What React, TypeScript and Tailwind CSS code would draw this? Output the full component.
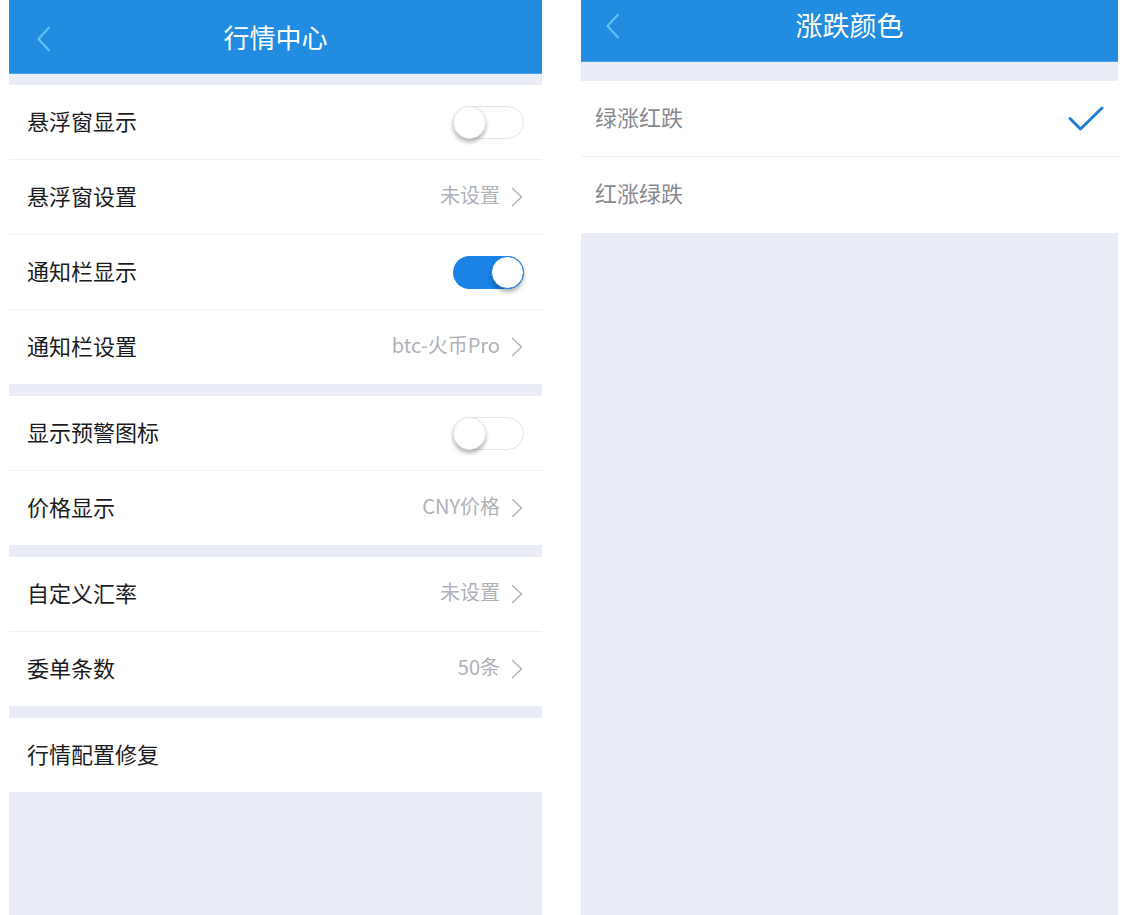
import React from 'react';

type Row = {
    label: string;
    value?: string;
    toggle?: boolean;
    arrow?: boolean;
};

const groups: Row[][] = [
    [
        { label: '悬浮窗显示', toggle: false },
        { label: '悬浮窗设置', value: '未设置', arrow: true },
        { label: '通知栏显示', toggle: true },
        { label: '通知栏设置', value: 'btc-火币Pro', arrow: true },
    ],
    [
        { label: '显示预警图标', toggle: false },
        { label: '价格显示', value: 'CNY价格', arrow: true },
    ],
    [
        { label: '自定义汇率', value: '未设置', arrow: true },
        { label: '委单条数', value: '50条', arrow: true },
    ],
    [{ label: '行情配置修复' }],
];

const font = { fontFamily: '"Noto Sans CJK SC", "Noto Sans", sans-serif' };

function BackArrow() {
    return (
        <svg width="16" height="26" viewBox="0 0 16 26" fill="none">
            <path d="M13 1.5 L2.5 13 L13 24.5" stroke="#5ec4f6" strokeWidth="2" strokeLinecap="round" strokeLinejoin="round" />
        </svg>
    );
}

function Chevron() {
    return (
        <svg width="14" height="20" viewBox="0 0 14 20" fill="none">
            <path d="M2.5 1.5 L11.5 10 L2.5 18.5" stroke="#b4b6bc" strokeWidth="1.6" strokeLinecap="round" strokeLinejoin="round" />
        </svg>
    );
}

function Toggle({ on }: { on: boolean }) {
    if (on) {
        return (
            <div className="relative h-[33px] w-[71px] rounded-full bg-[#1b82e6]">
                <div className="absolute right-0 top-0 h-[33px] w-[33px] rounded-full border border-[#1b82e6] bg-white shadow-[0_3px_4px_rgba(0,0,0,0.3)]" />
            </div>
        );
    }
    return (
        <div className="relative h-[33px] w-[71px] rounded-full border border-[#e4e4e6] bg-white">
            <div className="absolute -left-px -top-px h-[33px] w-[33px] rounded-full border border-[#e8e8ea] bg-white shadow-[0_3px_4px_rgba(0,0,0,0.3)]" />
        </div>
    );
}

function SettingRow({ row, last }: { row: Row; last: boolean }) {
    return (
        <div className={`flex items-center justify-between bg-white pl-[18px] pr-[18px] ${last ? 'h-[74px]' : 'h-[75px] border-b border-[#f0f0f2]'}`}>
            <span className="mb-[4px] text-[22px] text-[#1c1c1e]">{row.label}</span>
            {row.toggle !== undefined && <Toggle on={row.toggle} />}
            {row.value && (
                <div className="flex items-center gap-[10px]">
                    <span className="mb-[4px] text-[20px] text-[#b0b2b8]">{row.value}</span>
                    <Chevron />
                </div>
            )}
        </div>
    );
}

function MarketCenter() {
    return (
        <div className="flex h-[915px] w-[533px] flex-col bg-[#eaecf8]">
            <div className="relative flex h-[74px] items-center justify-center border-b border-[#4aa6ea] bg-[#218ce0]">
                <div className="absolute left-[27px] top-[26px]">
                    <BackArrow />
                </div>
                <span className="text-[26px] text-white">行情中心</span>
            </div>
            <div className="mt-[11px] flex flex-col gap-[12px]">
                {groups.map((g, gi) => (
                    <div key={gi} className="flex flex-col">
                        {g.map((r, ri) => (
                            <SettingRow key={r.label} row={r} last={ri === g.length - 1} />
                        ))}
                    </div>
                ))}
            </div>
        </div>
    );
}

function ColorSetting() {
    const options = ['绿涨红跌', '红涨绿跌'];
    return (
        <div className="flex h-[915px] w-[537px] flex-col bg-[#eaecf8]">
            <div className="relative flex h-[62px] items-center justify-center border-b border-[#4aa6ea] bg-[#218ce0] pb-[10px]">
                <div className="absolute left-[24px] top-[13px]">
                    <BackArrow />
                </div>
                <span className="text-[27px] text-white">涨跌颜色</span>
            </div>
            <div className="mt-[19px] flex flex-col">
                {options.map((o, i) => (
                    <div
                        key={o}
                        className={`flex h-[76px] items-center justify-between bg-white pl-[14px] pr-[14px] ${i === 0 ? 'border-b border-[#f0f0f2]' : ''}`}
                    >
                        <span className="mb-[5px] text-[22px] text-[#8a8a8e]">{o}</span>
                        {i === 0 && (
                            <svg width="36" height="26" viewBox="0 0 36 26" fill="none">
                                <path d="M2 12.5 L12.5 23 L34 2" stroke="#1f7fd8" strokeWidth="3" strokeLinecap="round" strokeLinejoin="round" />
                            </svg>
                        )}
                    </div>
                ))}
            </div>
        </div>
    );
}

export default function App() {
    return (
        <div className="flex h-[915px] w-[1129px] gap-[39px] overflow-hidden bg-white pl-[9px]" style={font}>
            <MarketCenter />
            <ColorSetting />
        </div>
    );
}
